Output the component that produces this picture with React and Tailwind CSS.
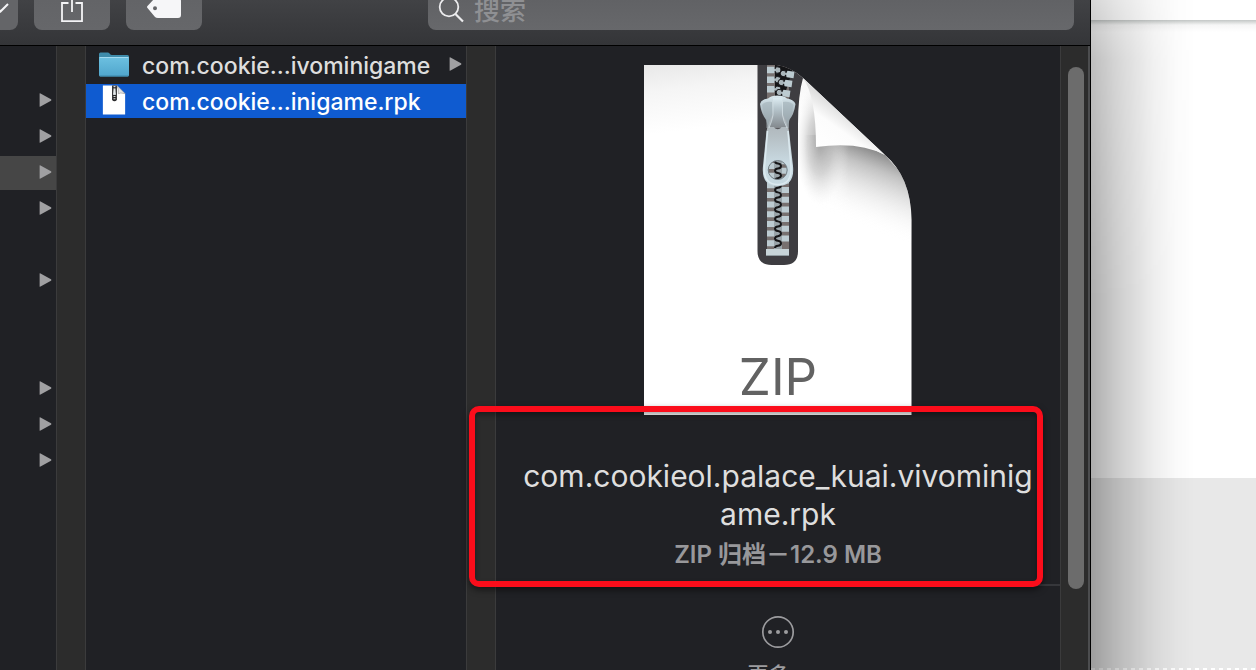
import React from 'react';

const FONT = "font-['Inter','Noto_Sans_CJK_SC',sans-serif]";

const PARENT_ROWS = [
  { arrow: false },
  { arrow: true },
  { arrow: true },
  { arrow: true, active: true },
  { arrow: true },
  { arrow: false },
  { arrow: true },
  { arrow: false },
  { arrow: false },
  { arrow: true },
  { arrow: true },
  { arrow: true },
];

function Arrow() {
  return (
    <svg width="13" height="14" viewBox="0 0 13 14" className="shrink-0" aria-hidden="true">
      <path d="M0.6 0.8Q0.6 0 1.5 0.4L12 6.2Q12.9 7 12 7.8L1.5 13.6Q0.6 14 0.6 13.2Z" fill="#a0a0a2" />
    </svg>
  );
}

function FolderIcon() {
  return (
    <svg width="30" height="25" viewBox="0 0 30 25" aria-hidden="true">
      <defs>
        <linearGradient id="folder" x1="0" y1="0" x2="0" y2="1">
          <stop offset="0" stopColor="#6cc0e0" />
          <stop offset="1" stopColor="#50a5cc" />
        </linearGradient>
      </defs>
      <path d="M0 5V2Q0 0.5 1.500 0.500H9Q10.200 0.500 11 2Q11.500 3 13 3H28.500Q30 3 30 4.500V8H0Z" fill="#3f8cab" />
      <path d="M0 5.500H30V23Q30 24.500 28.500 24.500H1.500Q0 24.500 0 23Z" fill="url(#folder)" />
      <path d="M0.500 5.500H29.500" stroke="#a3daf0" strokeWidth="1" />
      <path d="M1 24H29" stroke="#3c87a8" strokeWidth="1" />
    </svg>
  );
}

function FileIcon() {
  return (
    <svg width="24" height="30" viewBox="0 0 24 31" aria-hidden="true">
      <path d="M0.500 0.500H15L23.500 9V30.500H0.500Z" fill="#fff" />
      <path d="M15 0.500L23.500 9Q18 7.500 16.500 9Q17 4 15 0.500Z" fill="#e4e4e4" stroke="#8c8c8c" strokeWidth="0.600" />
      <path d="M10 0.500H15V15.500Q12.500 18 10 15.500Z" fill="#28282a" />
      <path d="M12.500 1V4M12.500 9V16" stroke="#ddd" strokeWidth="2" strokeDasharray="1.200 1.100" />
      <path d="M11.500 4H13.500L14 10H11Z" fill="#e3e8ea" />
    </svg>
  );
}

const OPEN_LEFT_TEETH = [5, 14.7, 24.3];
const OPEN_RIGHT_TEETH = [
  [150, 10],
  [148, 19],
  [146, 29],
];
const CLOSED_LEFT_TEETH = [101, 110.7, 120.3, 130, 139.6, 149.3, 159, 168.6, 178.3];
const CLOSED_RIGHT_TEETH = [96.2, 105.8, 115.5, 125.1, 134.8, 144.5, 154.1, 163.8, 173.4];

const SEAM = CLOSED_RIGHT_TEETH.map(
  (y) => `M131 ${y}C131 ${y + 4} 137 ${y + 0.5} 137 ${y + 4.8}C137 ${y + 9.2} 131 ${y + 5.6} 131 ${y + 9.65}`,
).join('');

function OpenTooth({ x, y, turn }) {
  return (
    <g transform={`translate(${x} ${y}) rotate(${turn})`}>
      <path d="M6 -1.600H8.500V-2.900Q13.500 -4 14 0Q13.500 4 8.500 2.900V1.600H6Z" fill="#aab6bb" stroke="#17171a" strokeWidth="1" />
      <path d="M0 -3.200H7L7.600 -2V2L7 3.200H0Z" fill="#bccbd1" />
    </g>
  );
}

function ZipDocument() {
  const page = 'M0 0H132Q147 2 159 13L241 90Q267 112 267.500 155V350H0Z';
  return (
    <svg width="268" height="350" viewBox="0 0 268 350" role="img" aria-label="ZIP" className="block shrink-0">
      <defs>
        <linearGradient id="page" x1="0" y1="0" x2="0.100" y2="1">
          <stop offset="0" stopColor="#e8e8e8" />
          <stop offset="0.080" stopColor="#f5f5f5" />
          <stop offset="0.200" stopColor="#ffffff" />
          <stop offset="1" stopColor="#ffffff" />
        </linearGradient>
        <linearGradient id="foldShade" gradientUnits="userSpaceOnUse" x1="218" y1="78" x2="190" y2="150">
          <stop offset="0" stopColor="#6c6c6c" stopOpacity="0.850" />
          <stop offset="0.250" stopColor="#909090" stopOpacity="0.550" />
          <stop offset="0.600" stopColor="#c8c8c8" stopOpacity="0.300" />
          <stop offset="1" stopColor="#ffffff" stopOpacity="0" />
        </linearGradient>
        <linearGradient id="foldFade" gradientUnits="userSpaceOnUse" x1="160" y1="0" x2="205" y2="0">
          <stop offset="0" stopColor="#000" />
          <stop offset="1" stopColor="#fff" />
        </linearGradient>
        <mask id="foldMask">
          <rect x="150" y="60" width="120" height="140" fill="url(#foldFade)" />
        </mask>
        <radialGradient id="sideShade" gradientUnits="userSpaceOnUse" cx="176" cy="78" r="62" gradientTransform="translate(176 78) scale(0.400 1) translate(-176 -78)">
          <stop offset="0" stopColor="#a0a0a0" stopOpacity="0.900" />
          <stop offset="0.500" stopColor="#b8b8b8" stopOpacity="0.550" />
          <stop offset="1" stopColor="#e8e8e8" stopOpacity="0" />
        </radialGradient>
        <linearGradient id="curl" gradientUnits="userSpaceOnUse" x1="177" y1="82" x2="201" y2="48">
          <stop offset="0" stopColor="#ffffff" />
          <stop offset="0.600" stopColor="#fcfcfc" />
          <stop offset="1" stopColor="#dfdfdf" />
        </linearGradient>
        <linearGradient id="metal" x1="0" y1="0" x2="0" y2="1">
          <stop offset="0" stopColor="#dcebf1" />
          <stop offset="0.350" stopColor="#b8c7ce" />
          <stop offset="1" stopColor="#858b90" />
        </linearGradient>
        <linearGradient id="pull" x1="0" y1="0" x2="0" y2="1">
          <stop offset="0" stopColor="#a6abb0" />
          <stop offset="0.350" stopColor="#b6c0c5" />
          <stop offset="0.700" stopColor="#c9dae2" />
          <stop offset="1" stopColor="#c5d8e0" />
        </linearGradient>
        <clipPath id="pageClip">
          <path d={page} />
        </clipPath>
      </defs>
      <path d={page} fill="url(#page)" />
      <g clipPath="url(#pageClip)">
        <rect x="150" y="10" width="60" height="135" fill="url(#sideShade)" />
        <path d="M154 70H172Q215 76 241 90L268 120V190Q210 175 154 135Z" fill="url(#foldShade)" mask="url(#foldMask)" />
        <path d="M113.500 0H170L159 13Q154 30 154 60V186Q154 200 140 200H127.500Q113.500 200 113.500 186Z" fill="#3e3d41" />
        <rect x="123" y="0" width="22" height="184" fill="#77706f" />
        <path d="M131 0H150L140 32H131Z" fill="#141416" />
        <rect x="130" y="92" width="8" height="92" fill="#9aa5aa" />
        {CLOSED_LEFT_TEETH.map((y) => (
          <path key={y} d={`M123 ${y - 3}H130V${y + 3}H123Z`} fill="#bccbd1" />
        ))}
        {CLOSED_RIGHT_TEETH.map((y) => (
          <path key={y} d={`M138 ${y - 3}H145V${y + 3}H138Z`} fill="#bccbd1" />
        ))}
        <path d={SEAM} fill="none" stroke="#141416" strokeWidth="2" />
        {OPEN_LEFT_TEETH.map((y) => (
          <OpenTooth key={y} x={123} y={y} turn={0} />
        ))}
        {OPEN_RIGHT_TEETH.map(([x, y]) => (
          <OpenTooth key={y} x={x} y={y} turn={188} />
        ))}
      </g>
      <rect x="122" y="184" width="23" height="7" fill="#c7d4d8" />
      <path d="M122 190.500H145" stroke="#8f9ba0" strokeWidth="1" />
      <path d="M116 39Q117 34.500 124 33.500Q127 30.500 133.500 30.500Q140 30.500 143 33.500Q150 34.500 151.500 39Q150 50 145 55V63H122.500V55Q117.500 50 116 39Z" fill="url(#metal)" />
      <path d="M118 40Q121 36 128 37V50Q127 56 124 61Q121 54 118 40Z" fill="#a1b1b8" opacity="0.600" />
      <path d="M149.500 40Q146 36 139 37V50Q140 56 143 61Q147 54 149.500 40Z" fill="#a1b1b8" opacity="0.600" />
      <path
        fillRule="evenodd"
        d="M129 48Q133.700 43 138.500 48Q143 57 145 66L149 101Q151 121 133.700 121Q117 121 119 101L122.500 66Q124.500 57 129 48ZM133.700 95.500A9.500 9.500 0 1 0 133.700 114.500A9.500 9.500 0 1 0 133.700 95.500Z"
        fill="url(#pull)"
      />
      <path d="M123.500 66L120.500 102Q119.500 119.500 133.700 119.500Q148 119.500 147 102L144 66" fill="none" stroke="#dbe9ef" strokeWidth="1.600" />
      <circle cx="133.700" cy="105" r="9.500" fill="none" stroke="#737f86" strokeWidth="1" />
      <path d="M129 33H138.500V50Q141 58 143 62H125Q127.500 56 129 50Z" fill="url(#metal)" />
      <path d="M129 36V50Q128 56 125 63M138.500 36V50Q139.500 56 143 63" fill="none" stroke="#d3dfe4" strokeWidth="0.800" />
      <path d="M130 62.500Q133.700 66 137.500 62.500" fill="#57575b" />
      <path d="M159 13L241 90Q215 76 172 82Q172 31 159 13Z" fill="url(#curl)" />
      <text x="134" y="330" textAnchor="middle" className="font-['Inter',sans-serif]" fontSize="51" fontWeight="400" fill="#626262">
        ZIP
      </text>
    </svg>
  );
}

function Toolbar() {
  const button = 'flex h-10 w-[76px] shrink-0 justify-center rounded-lg bg-linear-to-b from-[#626366] to-[#66676a]';
  return (
    <header className="flex h-[46px] shrink-0 items-end gap-4 overflow-hidden border-b border-black bg-linear-to-b from-[#414245] to-[#343538] pr-4 pb-[15px]">
      <button aria-label="Group" className="h-10 w-[18px] shrink-0 rounded-r-lg bg-[#646568]">
        <svg width="18" height="40" viewBox="0 0 18 40" fill="none" aria-hidden="true">
          <path d="M-4 17L0.500 21.500L8 14" stroke="#f4f4f6" strokeWidth="2" />
        </svg>
      </button>
      <button aria-label="Share" className={button}>
        <svg width="24" height="40" viewBox="0 0 24 40" fill="none" aria-hidden="true">
          <path d="M8.500 13H2V31.200H22V13H15.500M12 4V22M7 9L12 4L17 9" stroke="#f4f4f6" strokeWidth="1.800" />
        </svg>
      </button>
      <button aria-label="Tags" className={button}>
        <svg width="36" height="40" viewBox="0 0 36 40" aria-hidden="true">
          <path
            fillRule="evenodd"
            d="M1.500 18Q0.500 17 1.500 16L8 9Q9 8 11 8H32Q35 8 35 11V25Q35 28 32 28H12Q10 28 9 27ZM9 16.200A2 2 0 1 0 9 20.200A2 2 0 1 0 9 16.200Z"
            fill="#f6f6f8"
          />
        </svg>
      </button>
      <label className="ml-[210px] flex h-10 min-w-0 flex-1 items-center gap-2 rounded-lg bg-linear-to-b from-[#5f6063] to-[#67686b] pl-[10px]">
        <svg width="28" height="28" viewBox="0 0 28 28" fill="none" aria-hidden="true">
          <circle cx="11" cy="11" r="9.300" stroke="#ececee" strokeWidth="1.800" />
          <path d="M17.500 18L25 25.500" stroke="#ececee" strokeWidth="2.200" />
        </svg>
        <input
          type="search"
          aria-label="搜索"
          placeholder="搜索"
          className="h-10 min-w-0 flex-1 bg-transparent text-[26px] font-medium text-white outline-none placeholder:text-[#8f9093]"
        />
      </label>
    </header>
  );
}

function Gutter() {
  return <div className="w-[30px] shrink-0 border-x border-[#3b3b3c] bg-[#2c2c2c]" />;
}

function ParentColumn() {
  return (
    <ul className="flex w-14 shrink-0 flex-col gap-[2px] pt-[2px]">
      {PARENT_ROWS.map((row, i) => (
        <li key={i} className={`flex h-[34px] shrink-0 items-center justify-end pr-1 pb-[2px] ${row.active ? 'bg-[#464646]' : ''}`}>
          {row.arrow && <Arrow />}
        </li>
      ))}
    </ul>
  );
}

function FileColumn() {
  const row = 'flex h-[34px] items-center pr-1 pl-[13px] text-[23px] font-medium';
  return (
    <ul className="flex w-[380px] shrink-0 flex-col gap-[2px] pt-[2px]">
      <li className={`${row} text-[#dedede]`}>
        <span className="flex w-[43px] pb-[2px]">
          <FolderIcon />
        </span>
        <span className="flex-1 pt-[2px] whitespace-nowrap">com.cookie...ivominigame</span>
        <span className="pb-[2px]">
          <Arrow />
        </span>
      </li>
      <li className={`${row} bg-[#0f5bd0] text-white`}>
        <span className="flex w-[43px] pb-[2px] pl-[3px]">
          <FileIcon />
        </span>
        <span className="flex-1 pt-[2px] whitespace-nowrap">com.cookie...inigame.rpk</span>
      </li>
    </ul>
  );
}

function Preview() {
  return (
    <section className="flex min-w-0 flex-1 flex-col items-center pt-[19px]">
      <ZipDocument />
      <div className="relative w-full border-b-2 border-[#36373b] pt-[42px] pb-[11px] text-center">
        <div className="absolute top-[-9px] right-[17px] bottom-[-3px] left-[-27px] rounded-[10px] border-[6px] border-[#fb0d1b] shadow-[0_3px_6px_rgba(0,0,0,0.5),inset_0_3px_5px_rgba(0,0,0,0.35)]" />
        <h1 className="text-[30px] leading-[38px] text-[#dedede]">
          com.cookieol.palace_kuai.vivominig
          <br />
          ame.rpk
        </h1>
        <p className="pt-1 text-2xl leading-9 font-semibold text-[#98989b]">ZIP 归档－12.9 MB</p>
      </div>
      <button className="flex flex-col items-center gap-3 pt-[29px] text-[#9c9c9f]">
        <svg width="34" height="34" viewBox="0 0 34 34" aria-hidden="true">
          <circle cx="17" cy="17" r="15.200" fill="none" stroke="currentColor" strokeWidth="1.700" />
          <circle cx="9" cy="17" r="2" fill="currentColor" />
          <circle cx="17" cy="17" r="2" fill="currentColor" />
          <circle cx="25" cy="17" r="2" fill="currentColor" />
        </svg>
        <span className="text-[21px] leading-7 font-medium">更多…</span>
      </button>
    </section>
  );
}

function Backdrop() {
  return (
    <aside className="relative flex w-[165px] shrink-0 flex-col bg-white">
      <div className="h-5 shrink-0" />
      <div className="h-[458px] shrink-0 bg-linear-to-b from-[#c3c7c6] via-[#f6f6f6] via-[5px] to-white to-[12px]" />
      <div className="flex-1 bg-[#e8e8e8]" />
      <div className="h-[2px] shrink-0 bg-[repeating-linear-gradient(90deg,#ffffff_0_4px,#e8e8e8_4px_8px)]" />
      <div className="absolute inset-y-0 left-0 w-[104px] bg-[linear-gradient(90deg,rgba(0,0,0,0.32),rgba(0,0,0,0.2)_25%,rgba(0,0,0,0.07)_60%,rgba(0,0,0,0.02)_82%,transparent)] mask-[linear-gradient(180deg,rgba(0,0,0,0.5),rgba(0,0,0,0.8)_60px,black_300px)]" />
    </aside>
  );
}

export default function App() {
  return (
    <div className={`flex h-screen overflow-hidden bg-white ${FONT}`}>
      <main className="flex min-w-0 flex-1 flex-col border-r border-black bg-[#202125]">
        <Toolbar />
        <div className="flex min-h-0 flex-1">
          <ParentColumn />
          <Gutter />
          <FileColumn />
          <Gutter />
          <Preview />
          <div className="w-[30px] shrink-0 border-r-2 border-l border-r-[#4c4d4f] border-l-[#3b3b3c] bg-[#2c2c2c] px-[7px] pt-[21px]">
            <div className="h-[522px] w-4 rounded-full bg-[#6c6c6c]" />
          </div>
        </div>
      </main>
      <Backdrop />
    </div>
  );
}
